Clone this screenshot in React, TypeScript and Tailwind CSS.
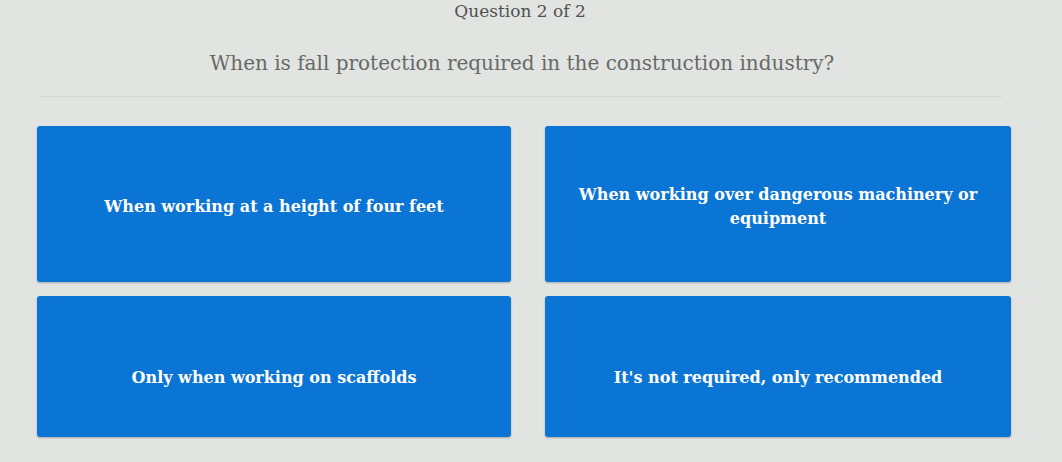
import React from "react";

const options = [
  "When working at a height of four feet",
  "When working over dangerous machinery or equipment",
  "Only when working on scaffolds",
  "It's not required, only recommended",
];

const slab = { fontFamily: '"DejaVu Serif", "Liberation Serif", serif' };

export default function App() {
  return (
    <div
      className="w-[1062px] h-[462px] overflow-hidden bg-[#e2e4e2] flex flex-col"
      style={slab}
    >
      <div className="h-[24px] flex items-start justify-center">
        <span className="text-[17px] leading-[22px] text-[#4f5250] ml-[-22px]">
          Question 2 of 2
        </span>
      </div>
      <div className="mt-[25px] flex justify-center">
        <h1 className="text-[20px] leading-[28px] text-[#666a67] ml-[-18px]">
          When is fall protection required in the construction industry?
        </h1>
      </div>
      <div className="mt-[19px] ml-[40px] mr-[60px] h-px bg-[#d4d6d4]" />
      <div className="mt-[29px] ml-[37px] grid grid-cols-[474px_466px] grid-rows-[156px_141px] gap-x-[34px] gap-y-[14px]">
        {options.map((text, i) => (
          <button
            key={i}
            className={`rounded-[3px] bg-[#0b75d5] text-white font-bold text-[16px] leading-[24px] flex items-center justify-center text-center shadow-[0_1px_2px_rgba(0,0,0,0.25)] ${
              i < 2 ? "px-[22px] pt-[6px]" : "px-[22px] pt-[22px]"
            }`}
            style={slab}
          >
            {text}
          </button>
        ))}
      </div>
    </div>
  );
}
